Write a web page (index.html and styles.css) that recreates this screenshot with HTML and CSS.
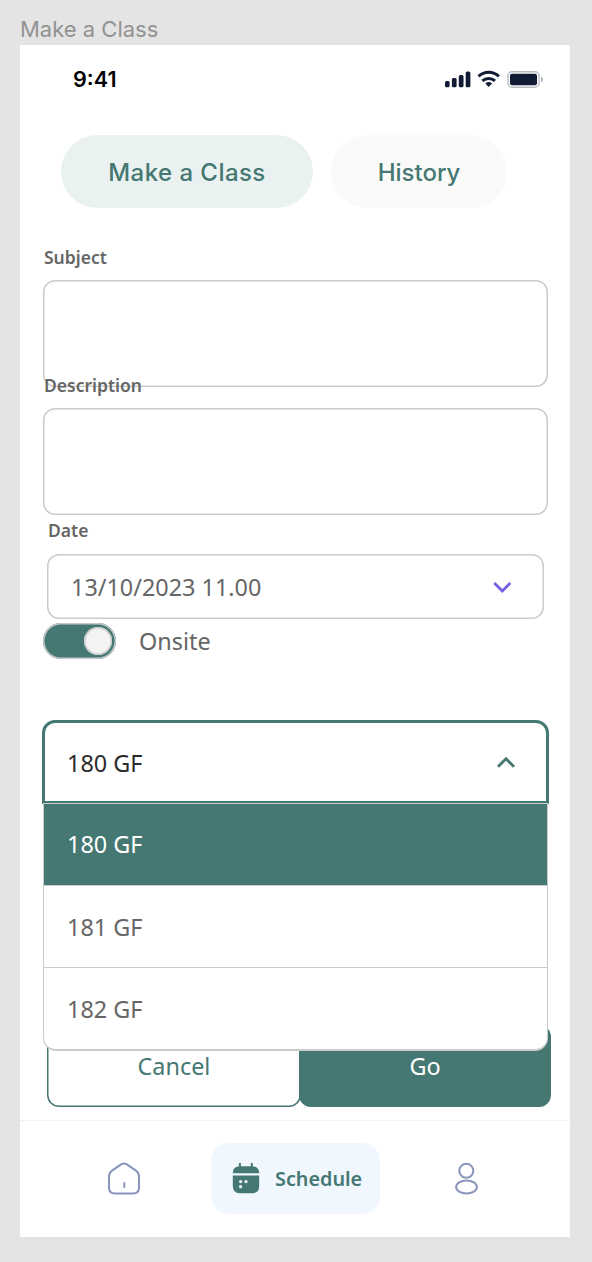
FILE: index.html
```html
<!DOCTYPE html>
<html lang="en">
<head>
<meta charset="utf-8">
<title>Make a Class</title>
<link rel="stylesheet" href="styles.css">
</head>
<body>
<div class="frame-title">Make a Class</div>
<main class="phone">
  <header class="status">
    <span class="time">9:41</span>
    <svg class="status-icons" width="100" height="20" viewBox="0 0 100 20" fill="#111b33">
      <rect x="1" y="12" width="4.6" height="6.3" rx="1.5"/>
      <rect x="7.9" y="9" width="4.7" height="9.3" rx="1.5"/>
      <rect x="14.8" y="6" width="4.7" height="12.3" rx="1.5"/>
      <rect x="21.7" y="2.6" width="4.7" height="15.7" rx="1.5"/>
      <g fill="none" stroke="#111b33" stroke-width="3">
        <path d="M34.5 7.4C40.3 1.9 49.1 1.9 54.9 7.4"/>
        <path d="M38.4 11.8C42 8.6 47.4 8.6 51 11.8"/>
      </g>
      <path d="M41.3 14.4q3.4-2.6 6.8 0l-3.4 3.7z"/>
      <rect x="64" y="2.8" width="31" height="15.4" rx="4" fill="none" stroke="#b9bcc4" stroke-width="1.4"/>
      <rect x="66" y="4.8" width="27" height="11.4" rx="2"/>
      <path d="M97 7.8q2 .7 2 2.7t-2 2.7z" fill="#a9adb8"/>
    </svg>
  </header>
  <nav class="tabs">
    <button class="tab tab-on">Make a Class</button>
    <button class="tab tab-off">History</button>
  </nav>
  <form class="form">
    <div class="field">
      <label class="label">Subject</label>
      <div class="box area"></div>
    </div>
    <div class="field overlap">
      <label class="label">Description</label>
      <div class="box area"></div>
    </div>
    <div class="field date">
      <label class="label">Date</label>
      <div class="box select">
        <span>13/10/2023 11.00</span>
        <svg width="20" height="14" viewBox="0 0 20 14" fill="none" stroke="#755fe2" stroke-width="2.8"><path d="M2.3 3.1L10.3 11L18.3 3.1"/></svg>
      </div>
    </div>
    <div class="switch-row">
      <span class="switch"><span class="knob"></span></span>
      <span>Onsite</span>
    </div>
    <div class="dropdown">
      <div class="trigger">
        <span>180 GF</span>
        <svg width="20" height="14" viewBox="0 0 20 14" fill="none" stroke="#457872" stroke-width="2.8"><path d="M2 10.7L10 2.8L18 10.7"/></svg>
      </div>
      <div class="menu">
        <div class="option chosen">180 GF</div>
        <div class="option">181 GF</div>
        <div class="option">182 GF</div>
      </div>
    </div>
    <div class="actions">
      <button type="button" class="btn cancel">Cancel</button>
      <button type="button" class="btn go">Go</button>
    </div>
  </form>
  <footer class="bottom">
    <svg class="home" width="36" height="36" viewBox="0 0 36 36" fill="none" stroke="#8995bb" stroke-width="2">
      <path d="M14.8 3.6Q18 1.5 21.2 3.6L30 9.6Q33 12 33 15.5V26.5Q33 32.5 27 32.5H9Q3 32.5 3 26.5V15.5Q3 12 6 9.6Z"/>
      <path d="M18.3 21.2v5.6"/>
    </svg>
    <div class="pill">
      <svg width="28" height="32" viewBox="0 0 28 32">
        <path d="M.8 10.3Q.8 3.3 7.8 3.3h12.4q7 0 7 7zM.8 12.4h26.4V23q0 7.2-7 7.2H7.8q-7 0-7-7.2zM6.9 0h2v4h-2zM18.8 0h2v4h-2z" fill="#457872"/>
        <g fill="#f0f7ff"><circle cx="8.6" cy="18.6" r="1.6"/><circle cx="14" cy="18.6" r="1.6"/><circle cx="8.6" cy="23.7" r="1.6"/></g>
      </svg>
      <span>Schedule</span>
    </div>
    <svg class="user" width="26" height="36" viewBox="0 0 26 36" fill="none" stroke="#8995bb" stroke-width="2">
      <circle cx="13.3" cy="9.8" r="7"/>
      <ellipse cx="13.5" cy="26" rx="10.4" ry="6.6"/>
    </svg>
  </footer>
</main>
</body>
</html>
```

FILE: styles.css
```css
* { box-sizing: border-box; }
body {
  margin: 0;
  padding: 14px 20px 0;
  height: 1262px;
  background: #e4e4e4;
  color: #666;
  font: 23.4px/30px "Noto Sans", sans-serif;
}
svg { display: block; flex: none; }
button { border: 0; padding: 0; font: inherit; }
.frame-title {
  height: 31px;
  font: 22px/30px Inter, sans-serif;
  color: #929292;
}
.phone {
  display: flex;
  flex-direction: column;
  width: 550px;
  height: 1192px;
  background: #fff;
}
.status {
  display: flex;
  align-items: center;
  justify-content: space-between;
  height: 68px;
  padding: 0 26px 0 53px;
}
.time { font: 600 21.6px/30px Inter, sans-serif; color: #000; }
.tabs { display: flex; gap: 18px; padding: 22px 0 0 41px; }
.tab {
  height: 73px;
  padding-top: 2px;
  border-radius: 37px;
  color: #457872;
  font: 500 24px/30px Inter, sans-serif;
}
.tab-on { width: 252px; background: #eaf1f1; letter-spacing: .45px; }
.tab-off { width: 176px; background: #fafafa; }
.form { display: flex; flex-direction: column; flex: 1; padding: 37px 19px 0 23px; }
.field { width: 505px; }
.label { display: block; height: 35px; padding-left: 1px; font-size: 17.5px; font-weight: 600; line-height: 25px; }
.box { border-radius: 12px; box-shadow: inset 0 0 0 1.5px #cbcbcb; }
.area { height: 107px; }
.overlap { margin-top: -14px; }
.overlap .label { line-height: 24px; }
.date { width: 497px; margin: 4px 0 0 4px; }
.date .label { line-height: 22px; }
.select {
  display: flex;
  align-items: center;
  justify-content: space-between;
  height: 65px;
  padding: 0 32px 0 24px;
}
.switch-row { display: flex; align-items: center; gap: 23px; height: 36px; margin-top: 4px; }
.switch {
  display: flex;
  align-items: center;
  justify-content: flex-end;
  width: 73px;
  height: 36px;
  padding-right: 4px;
  border-radius: 18px;
  background: #457872;
  box-shadow: inset 0 0 0 1.5px #c3c9c8;
}
.knob {
  width: 28px;
  height: 28px;
  border-radius: 50%;
  background: #f3f3f3;
  box-shadow: inset 0 0 0 1.5px #cbcbcb;
}
.dropdown { position: relative; z-index: 1; width: 507px; height: 84px; margin: 61px 0 0 -1px; }
.trigger {
  display: flex;
  align-items: center;
  justify-content: space-between;
  height: 84px;
  padding: 1px 30px 0 22px;
  border: 3px solid #457872;
  border-radius: 13px 13px 0 0;
  background: #fff;
  color: #2b2b2b;
}
.menu {
  position: absolute;
  top: 83px;
  left: 1px;
  width: 505px;
  height: 248px;
  border: 1px solid #cbcbcb;
  border-radius: 0 0 13px 13px;
  border-bottom-width: 2px;
  background: #fff;
  overflow: hidden;
}
.option { height: 82px; padding-left: 23px; line-height: 82px; }
.option + .option { border-top: 1px solid #cbcbcb; }
.option.chosen { height: 81px; line-height: 81px; background: #457872; color: #fff; }
.actions { display: flex; padding-left: 4px; margin-top: 221px; }
.btn { height: 82px; border-radius: 12px; }
.cancel { width: 254px; background: #fff; color: #457872; box-shadow: inset 0 0 0 1.5px #457872; }
.go { width: 252px; margin-left: -2px; background: #457872; color: #fff; }
.bottom {
  display: flex;
  align-items: center;
  height: 117px;
  padding: 0 0 1px 86px;
  border-top: 1px solid #f3f3f3;
}
.pill {
  display: flex;
  align-items: center;
  gap: 15px;
  width: 169px;
  height: 71px;
  margin-left: 69px;
  padding-left: 21px;
  border-radius: 18px;
  background: #f0f7ff;
  color: #457872;
  font-size: 19.8px;
  font-weight: 600;
}
.user { margin-left: 73px; }
```
